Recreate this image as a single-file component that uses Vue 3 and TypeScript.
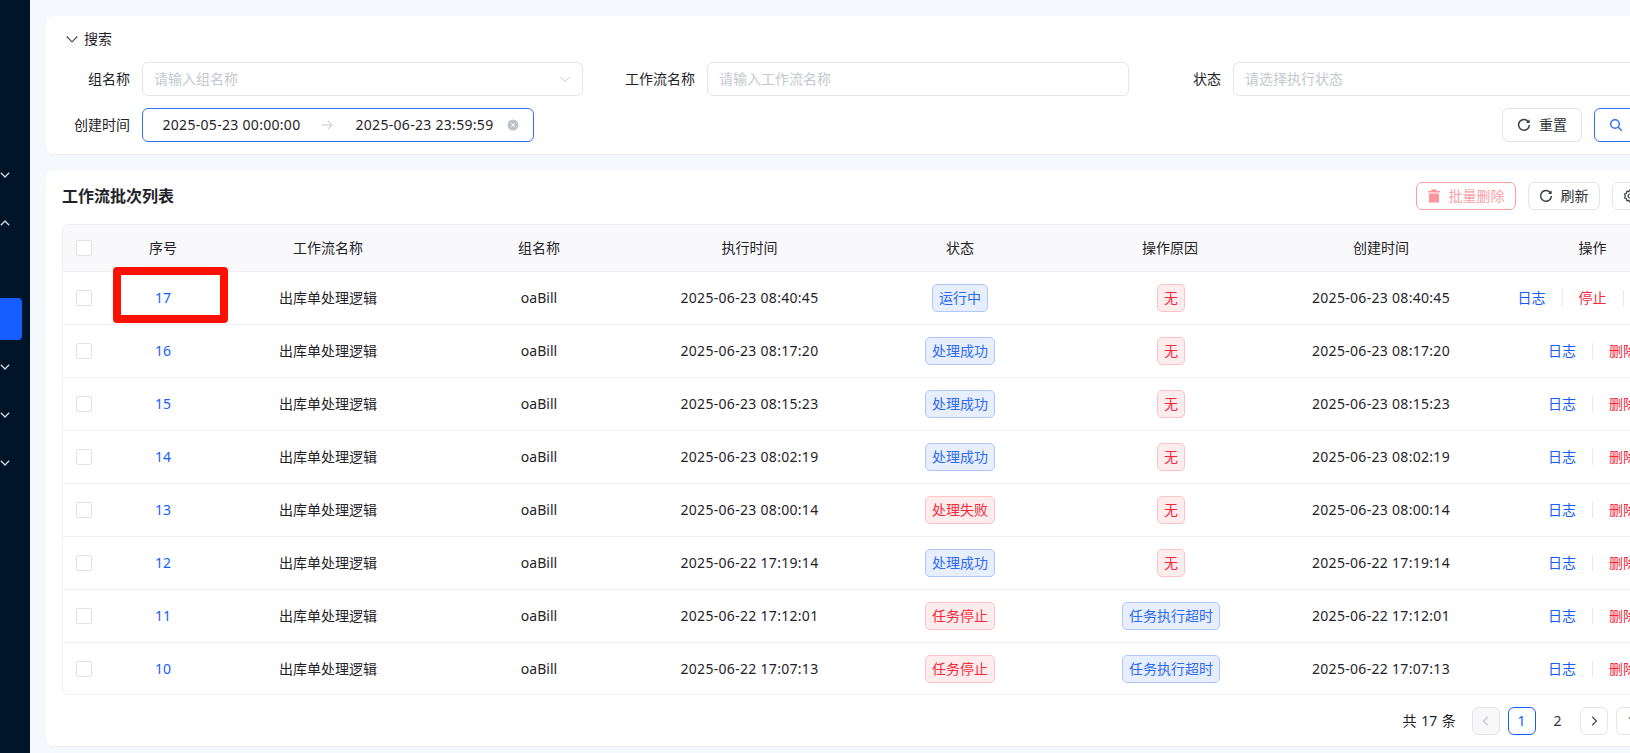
<template>
  <div class="page">
    <aside class="side">
      <div v-for="item in menu" :key="item.id" class="side-item" :class="item.cls">
        <svg v-if="item.icon" class="side-chev" viewBox="0 0 10 10" :class="{ up: item.icon === 'up' }">
          <path d="M.8 2.800L5 7l4.200-4.200" />
        </svg>
      </div>
    </aside>

    <main class="main">
      <section class="card search">
        <div class="search-head">
          <svg class="chev" viewBox="0 0 12 12"><path d="M.7 3.500L6 8.800l5.300-5.300" /></svg>
          <span>搜索</span>
        </div>
        <div class="form">
          <div class="field">
            <label style="width: 68px">组名称</label>
            <div class="input ph">
              <span>请输入组名称</span>
              <svg class="select-arrow" viewBox="0 0 12 12"><path d="M1.500 4l4.500 4.500L10.500 4" /></svg>
            </div>
          </div>
          <div class="field">
            <label style="width: 88px">工作流名称</label>
            <div class="input ph"><span>请输入工作流名称</span></div>
          </div>
          <div class="field">
            <label style="width: 68px">状态</label>
            <div class="input ph"><span>请选择执行状态</span></div>
          </div>
          <div class="field">
            <label style="width: 68px">创建时间</label>
            <div class="range">
              <span class="date">2025-05-23 00:00:00</span>
              <svg class="range-arrow" viewBox="0 0 12 12"><path d="M1 6h10M7 2l4 4-4 4" /></svg>
              <span class="date">2025-06-23 23:59:59</span>
              <svg class="clear" viewBox="0 0 12 12">
                <circle cx="6" cy="6" r="5.500" />
                <path d="M4.200 4.200l3.600 3.600M7.800 4.200l-3.600 3.600" />
              </svg>
            </div>
          </div>
          <div></div>
          <div class="form-actions">
            <button class="btn btn-lg">
              <svg class="ico" viewBox="0 0 14 14"><path class="reload" d="M11.700 4.200A5.400 5.400 0 1 0 12.400 7" /><path class="reload-tip" d="M12.600 1.300v3.600H9z" /></svg>
              <span>重置</span>
            </button>
            <button class="btn btn-lg btn-primary">
              <svg class="ico" viewBox="0 0 14 14"><circle class="glass" cx="6" cy="6" r="4.300" /><path class="glass" d="M9.200 9.200l3.600 3.600" /></svg>
              <span>搜索</span>
            </button>
          </div>
        </div>
      </section>

      <section class="card list">
        <div class="toolbar">
          <h2>工作流批次列表</h2>
          <div class="tools">
            <button class="btn btn-danger">
              <svg class="ico" viewBox="0 0 14 14"><path class="trash" d="M4.500.5h5V2H13v1.500H1V2h3.500zM2 4.500h10v9H2z" /></svg>
              <span>批量删除</span>
            </button>
            <button class="btn">
              <svg class="ico" viewBox="0 0 14 14"><path class="reload" d="M11.700 4.200A5.400 5.400 0 1 0 12.400 7" /><path class="reload-tip" d="M12.600 1.300v3.600H9z" /></svg>
              <span>刷新</span>
            </button>
            <button class="btn">
              <svg class="ico" viewBox="0 0 14 14">
                <path class="gear" d="M7 1l1.100 1.700 2-.4.500 2 1.900.800-.9 1.900.9 1.900-1.900.800-.5 2-2-.4L7 13l-1.100-1.700-2 .4-.500-2-1.900-.800.900-1.900-.900-1.900 1.900-.800.500-2 2 .4z" />
                <circle class="gear" cx="7" cy="7" r="2" />
              </svg>
              <span>列设置</span>
            </button>
          </div>
        </div>

        <div class="table">
          <div class="tr th">
            <div class="td"><i class="check"></i></div>
            <div v-for="h in headers" :key="h" class="td">{{ h }}</div>
          </div>
          <div v-for="r in rows" :key="r.id" class="tr">
            <div class="td"><i class="check"></i></div>
            <div class="td link">{{ r.id }}</div>
            <div class="td">出库单处理逻辑</div>
            <div class="td">oaBill</div>
            <div class="td date">{{ r.runAt }}</div>
            <div class="td"><span class="tag" :class="r.statusColor">{{ r.status }}</span></div>
            <div class="td reason"><span class="tag" :class="r.reason === '无' ? 'red' : 'blue'">{{ r.reason }}</span></div>
            <div class="td date">{{ r.runAt }}</div>
            <div class="td ops">
              <span class="op link">日志</span>
              <template v-if="r.status === '运行中'">
                <i class="sep"></i><span class="op danger">停止</span>
              </template>
              <i class="sep"></i><span class="op danger">删除</span>
            </div>
          </div>
        </div>

        <div class="pager">
          <span class="total">共 17 条</span>
          <button class="pg disabled"><svg viewBox="0 0 10 10"><path d="M6.500 1.500L3 5l3.500 3.500" /></svg></button>
          <button class="pg current">1</button>
          <button class="pg plain">2</button>
          <button class="pg"><svg viewBox="0 0 10 10"><path d="M3.500 1.500L7 5 3.500 8.500" /></svg></button>
          <button class="pg size">10 条/页</button>
        </div>
      </section>
    </main>

    <div class="mark"></div>
  </div>
</template>

<script setup lang="ts">
interface Row {
  id: number
  runAt: string
  status: string
  statusColor: string
  reason: string
}

const menu = [
  { id: 1, cls: 'top', icon: 'down' },
  { id: 2, cls: '', icon: 'up' },
  { id: 3, cls: 'active', icon: '' },
  { id: 4, cls: '', icon: 'down' },
  { id: 5, cls: '', icon: 'down' },
  { id: 6, cls: '', icon: 'down' },
]

const headers = ['序号', '工作流名称', '组名称', '执行时间', '状态', '操作原因', '创建时间', '操作']

const rows: Row[] = [
  { id: 17, runAt: '2025-06-23 08:40:45', status: '运行中', statusColor: 'blue', reason: '无' },
  { id: 16, runAt: '2025-06-23 08:17:20', status: '处理成功', statusColor: 'blue', reason: '无' },
  { id: 15, runAt: '2025-06-23 08:15:23', status: '处理成功', statusColor: 'blue', reason: '无' },
  { id: 14, runAt: '2025-06-23 08:02:19', status: '处理成功', statusColor: 'blue', reason: '无' },
  { id: 13, runAt: '2025-06-23 08:00:14', status: '处理失败', statusColor: 'red', reason: '无' },
  { id: 12, runAt: '2025-06-22 17:19:14', status: '处理成功', statusColor: 'blue', reason: '无' },
  { id: 11, runAt: '2025-06-22 17:12:01', status: '任务停止', statusColor: 'red', reason: '任务执行超时' },
  { id: 10, runAt: '2025-06-22 17:07:13', status: '任务停止', statusColor: 'red', reason: '任务执行超时' },
]
</script>

<style>
html,
body {
  margin: 0;
  overflow: hidden;
}
</style>

<style scoped>
.page {
  position: relative;
  display: flex;
  width: 1630px;
  height: 753px;
  overflow: hidden;
  background: #f5f8fc;
  color: #1f2329;
  font: 14px/22px 'Noto Sans', 'Noto Sans CJK SC', sans-serif;
}

.side {
  flex: 0 0 30px;
  background: #001529;
}

.side-item {
  display: flex;
  align-items: center;
  height: 48px;
}

.side-item.top {
  margin-top: 151px;
}

.side-item.active {
  width: 22px;
  height: 42px;
  margin: 51px 0 3px;
  background: #165dff;
  border-radius: 0 4px 4px 0;
}

.side-chev {
  width: 10px;
  height: 10px;
  fill: none;
  stroke: #cfd3d8;
  stroke-width: 1.400;
}

.side-chev.up {
  transform: rotate(180deg);
}

.main {
  flex: 0 0 1667px;
  margin-left: 16px;
  padding-top: 16px;
  border-top: 2px solid #eef0f4;
  margin-top: -2px;
}

.card {
  background: #fff;
  border-radius: 8px;
  padding: 12px 16px;
  box-shadow: 0 1px 2px rgba(30, 50, 90, 0.04);
}

.search {
  height: 138px;
  box-sizing: border-box;
}

.search-head {
  display: flex;
  align-items: center;
  gap: 6px;
  height: 22px;
  padding-left: 4px;
  margin-bottom: 12px;
}

.chev {
  width: 12px;
  height: 12px;
  fill: none;
  stroke: #3c4148;
  stroke-width: 1.100;
}

.form {
  display: grid;
  grid-template-columns: 521px 522px 521px;
  column-gap: 24px;
  row-gap: 12px;
}

.field {
  display: flex;
  align-items: center;
  gap: 12px;
}

.field label {
  flex: none;
  text-align: right;
}

.input {
  flex: 1;
  display: flex;
  align-items: center;
  justify-content: space-between;
  height: 34px;
  box-sizing: border-box;
  padding: 0 11px;
  border: 1px solid #e3e5ea;
  border-radius: 6px;
}

.ph {
  color: #c5c8ce;
}

.select-arrow {
  width: 12px;
  height: 12px;
  fill: none;
  stroke: #c5c8ce;
  stroke-width: 1;
}

.range {
  display: flex;
  align-items: center;
  width: 392px;
  height: 34px;
  box-sizing: border-box;
  padding-left: 19.500px;
  border: 1px solid #2f72f0;
  border-radius: 6px;
}

.date {
  letter-spacing: 0.3px;
}

.range-arrow {
  width: 12px;
  height: 12px;
  margin: 0 22px 0 21px;
  fill: none;
  stroke: #c5c8ce;
  stroke-width: 1;
}

.clear {
  width: 12px;
  height: 12px;
  margin-left: 14px;
}

.clear circle {
  fill: #bfc2c8;
}

.clear path {
  fill: none;
  stroke: #fff;
  stroke-width: 1;
}

.form-actions {
  display: flex;
  justify-content: flex-end;
  gap: 12px;
}

.btn {
  display: inline-flex;
  align-items: center;
  gap: 8px;
  height: 28px;
  padding: 0 10px;
  border: 1px solid #e3e5ea;
  border-radius: 6px;
  background: #fff;
  color: #30343a;
  font: inherit;
  box-sizing: border-box;
}

.btn-lg {
  height: 34px;
  padding: 0 14px;
}

.btn-primary {
  border-color: #2f72f0;
  color: #165dff;
}

.btn-danger {
  border-color: #ff9ea3;
  color: #ffa0a6;
}

.ico {
  width: 14px;
  height: 14px;
  flex: none;
}

.reload {
  fill: none;
  stroke: #3a3f46;
  stroke-width: 1.500;
}

.reload-tip {
  fill: #3a3f46;
}

.glass {
  fill: none;
  stroke: #2f72f0;
  stroke-width: 1.500;
}

.trash {
  fill: #ff949b;
}

.gear {
  fill: none;
  stroke: #3a3f46;
  stroke-width: 1.200;
}

.list {
  height: 576px;
  margin-top: 16px;
  box-sizing: border-box;
}

.toolbar {
  display: flex;
  align-items: center;
  justify-content: space-between;
  height: 28px;
  margin-bottom: 14px;
}

.toolbar h2 {
  margin: 0;
  font-size: 16px;
  font-weight: 700;
}

.tools {
  display: flex;
  gap: 12px;
  margin-right: 8px;
}

.table {
  border: 1px solid #eef0f5;
  border-radius: 6px;
  overflow: hidden;
}

.tr {
  display: grid;
  grid-template-columns: 41px 118px 212px 210px 211px 210px 210px 212px 211px;
  height: 53px;
  box-sizing: border-box;
  border-bottom: 1px solid #eef0f5;
}

.tr:last-child {
  height: 51px;
  border-bottom: 0;
}

.th {
  height: 47px;
  background: #f9f9fb;
}

.td {
  display: flex;
  align-items: center;
  justify-content: center;
  min-width: 0;
  white-space: nowrap;
}

.td.reason {
  padding-left: 2px;
}

.check {
  display: block;
  width: 16px;
  height: 16px;
  box-sizing: border-box;
  border: 1px solid #dfe1e6;
  border-radius: 2px;
  background: #fff;
}

.link {
  color: #165dff;
}

.tag {
  display: inline-block;
  padding: 0 6px;
  height: 28px;
  line-height: 26px;
  box-sizing: border-box;
  border: 1px solid;
  border-radius: 5px;
}

.tag.blue {
  color: #2f6bf0;
  background: #e7eefe;
  border-color: #aec8ff;
}

.tag.red {
  color: #f5283c;
  background: #ffeded;
  border-color: #ffc2c6;
}

.op {
  flex: none;
}

.danger {
  color: #f5283c;
}

.sep {
  flex: none;
  width: 1px;
  height: 16px;
  margin: 0 16px;
  background: #e8e9ed;
}

.pager {
  display: flex;
  align-items: center;
  gap: 8px;
  margin-top: 12px;
  padding-left: 1340.500px;
}

.total {
  width: 53px;
  margin-right: 8px;
  white-space: nowrap;
  word-spacing: 1px;
}

.pg {
  flex: none;
  display: flex;
  align-items: center;
  justify-content: center;
  width: 28px;
  height: 28px;
  padding: 0;
  box-sizing: border-box;
  border: 1px solid #e3e5ea;
  border-radius: 6px;
  background: #fff;
  color: #30343a;
  font: inherit;
}

.pg svg {
  width: 12px;
  height: 12px;
  fill: none;
  stroke: #4c5158;
  stroke-width: 1.100;
}

.pg.disabled {
  background: #f8f8fa;
}

.pg.disabled svg {
  stroke: #c5c8ce;
}

.pg.current {
  border-color: #165dff;
  color: #165dff;
}

.pg.plain {
  border-color: transparent;
}

.pg.size {
  width: 90px;
  justify-content: flex-start;
  padding-left: 11px;
}

.mark {
  position: absolute;
  left: 113px;
  top: 267px;
  width: 115px;
  height: 56px;
  box-sizing: border-box;
  border: 8px solid #fe1000;
  border-radius: 4px;
}
</style>
